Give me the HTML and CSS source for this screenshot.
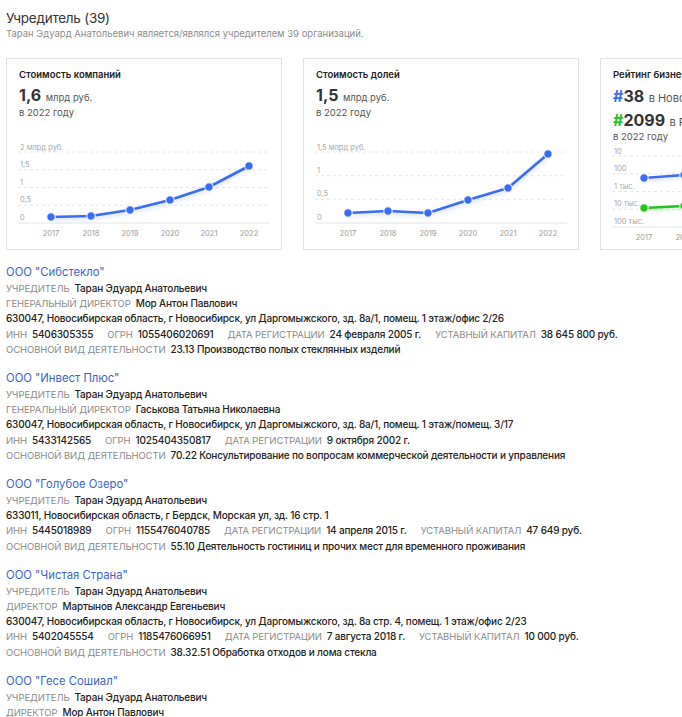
FILE: index.html
```html
<!DOCTYPE html>
<html lang="ru">
<head>
<meta charset="utf-8">
<title>Учредитель</title>
<link rel="stylesheet" href="styles.css">
</head>
<body>
<div class="page">
  <h1 class="title">Учредитель (39)</h1>
  <p class="subtitle">Таран Эдуард Анатольевич является/являлся учредителем 39 организаций.</p>

  <div class="cards">
    <div class="card">
      <div class="card-title">Стоимость компаний</div>
      <div class="big"><b>1,6</b> <span class="unit">млрд руб.</span></div>
      <div class="year">в 2022 году</div>
      <svg class="chart" width="252" height="100" viewBox="0 0 252 100">
        <g class="grid">
          <line x1="0" y1="14" x2="252" y2="14"/>
          <line x1="0" y1="31.75" x2="252" y2="31.75"/>
          <line x1="0" y1="49.5" x2="252" y2="49.5"/>
          <line x1="0" y1="67.25" x2="252" y2="67.25"/>
        </g>
        <line class="base" x1="0" y1="85" x2="252" y2="85"/>
        <g class="ylab">
          <text x="2" y="11.5">2 млрд руб.</text>
          <text x="2" y="29">1,5</text>
          <text x="2" y="46.5">1</text>
          <text x="2" y="64">0,5</text>
          <text x="2" y="82">0</text>
        </g>
        <g class="xlab">
          <text x="33" y="98">2017</text>
          <text x="73" y="98">2018</text>
          <text x="112" y="98">2019</text>
          <text x="152" y="98">2020</text>
          <text x="191" y="98">2021</text>
          <text x="231" y="98">2022</text>
        </g>
        <polyline class="line blue" points="33,79 73,78 112,72 152,62 191,49 231,28"/>
        <g class="dots blue">
          <circle cx="33" cy="79" r="4.2"/><circle cx="73" cy="78" r="4.2"/><circle cx="112" cy="72" r="4.2"/>
          <circle cx="152" cy="62" r="4.2"/><circle cx="191" cy="49" r="4.2"/><circle cx="231" cy="28" r="4.2"/>
        </g>
      </svg>
    </div>

    <div class="card">
      <div class="card-title">Стоимость долей</div>
      <div class="big"><b>1,5</b> <span class="unit">млрд руб.</span></div>
      <div class="year">в 2022 году</div>
      <svg class="chart" width="252" height="100" viewBox="0 0 252 100">
        <g class="grid">
          <line x1="0" y1="14" x2="252" y2="14"/>
          <line x1="0" y1="37.7" x2="252" y2="37.7"/>
          <line x1="0" y1="61.3" x2="252" y2="61.3"/>
        </g>
        <line class="base" x1="0" y1="85" x2="252" y2="85"/>
        <g class="ylab">
          <text x="2" y="11.5">1,5 млрд руб.</text>
          <text x="2" y="35">1</text>
          <text x="2" y="58">0,5</text>
          <text x="2" y="82">0</text>
        </g>
        <g class="xlab">
          <text x="33" y="98">2017</text>
          <text x="73" y="98">2018</text>
          <text x="113" y="98">2019</text>
          <text x="153" y="98">2020</text>
          <text x="193" y="98">2021</text>
          <text x="233" y="98">2022</text>
        </g>
        <polyline class="line blue" points="33,75 73,73 113,75 153,62 193,50 233,16"/>
        <g class="dots blue">
          <circle cx="33" cy="75" r="4.2"/><circle cx="73" cy="73" r="4.2"/><circle cx="113" cy="75" r="4.2"/>
          <circle cx="153" cy="62" r="4.2"/><circle cx="193" cy="50" r="4.2"/><circle cx="233" cy="16" r="4.2"/>
        </g>
      </svg>
    </div>

    <div class="card">
      <div class="card-title">Рейтинг бизнесменов</div>
      <div class="big rank"><b><span class="hash-blue">#</span>38</b> <span class="place">в Новосибирской области</span></div>
      <div class="big rank"><b><span class="hash-green">#</span>2099</b> <span class="place">в России</span></div>
      <div class="year tight">в 2022 году</div>
      <svg class="chart" width="252" height="100" viewBox="0 0 252 100">
        <g class="grid">
          <line x1="0" y1="14" x2="252" y2="14"/>
          <line x1="0" y1="31.75" x2="252" y2="31.75"/>
          <line x1="0" y1="49.5" x2="252" y2="49.5"/>
          <line x1="0" y1="67.25" x2="252" y2="67.25"/>
        </g>
        <line class="base" x1="0" y1="85" x2="252" y2="85"/>
        <g class="ylab">
          <text x="2" y="11.5">10</text>
          <text x="2" y="29">100</text>
          <text x="2" y="46.5">1 тыс.</text>
          <text x="2" y="64">10 тыс.</text>
          <text x="2" y="82">100 тыс.</text>
        </g>
        <g class="xlab">
          <text x="32" y="98">2017</text>
          <text x="72" y="98">2018</text>
          <text x="112" y="98">2019</text>
          <text x="152" y="98">2020</text>
          <text x="192" y="98">2021</text>
          <text x="232" y="98">2022</text>
        </g>
        <polyline class="line blue" points="32,36 72,33 112,30 152,26 192,22 232,18"/>
        <polyline class="line green" points="32,66 72,64 112,62 152,60 192,58 232,56"/>
        <g class="dots blue">
          <circle cx="32" cy="36" r="4.2"/><circle cx="72" cy="33" r="4.2"/><circle cx="112" cy="30" r="4.2"/>
          <circle cx="152" cy="26" r="4.2"/><circle cx="192" cy="22" r="4.2"/><circle cx="232" cy="18" r="4.2"/>
        </g>
        <g class="dots green">
          <circle cx="32" cy="66" r="4.2"/><circle cx="72" cy="64" r="4.2"/><circle cx="112" cy="62" r="4.2"/>
          <circle cx="152" cy="60" r="4.2"/><circle cx="192" cy="58" r="4.2"/><circle cx="232" cy="56" r="4.2"/>
        </g>
      </svg>
    </div>
  </div>

  <div class="companies">
    <div class="company">
      <a class="name" href="#">ООО "Сибстекло"</a>
      <div class="row"><span class="lbl">Учредитель</span><span class="val">Таран Эдуард Анатольевич</span></div>
      <div class="row"><span class="lbl">Генеральный директор</span><span class="val">Мор Антон Павлович</span></div>
      <div class="row"><span class="val">630047, Новосибирская область, г Новосибирск, ул Даргомыжского, зд. 8а/1, помещ. 1 этаж/офис 2/26</span></div>
      <div class="row"><span class="lbl">ИНН</span><span class="val">5406305355</span><span class="lbl">ОГРН</span><span class="val">1055406020691</span><span class="lbl">Дата регистрации</span><span class="val">24 февраля 2005 г.</span><span class="lbl">Уставный капитал</span><span class="val">38 645 800 руб.</span></div>
      <div class="row"><span class="lbl">Основной вид деятельности</span><span class="val">23.13 Производство полых стеклянных изделий</span></div>
    </div>

    <div class="company">
      <a class="name" href="#">ООО "Инвест Плюс"</a>
      <div class="row"><span class="lbl">Учредитель</span><span class="val">Таран Эдуард Анатольевич</span></div>
      <div class="row"><span class="lbl">Генеральный директор</span><span class="val">Гаськова Татьяна Николаевна</span></div>
      <div class="row"><span class="val">630047, Новосибирская область, г Новосибирск, ул Даргомыжского, зд. 8а/1, помещ. 1 этаж/помещ. 3/17</span></div>
      <div class="row"><span class="lbl">ИНН</span><span class="val">5433142565</span><span class="lbl">ОГРН</span><span class="val">1025404350817</span><span class="lbl">Дата регистрации</span><span class="val">9 октября 2002 г.</span></div>
      <div class="row"><span class="lbl">Основной вид деятельности</span><span class="val">70.22 Консультирование по вопросам коммерческой деятельности и управления</span></div>
    </div>

    <div class="company">
      <a class="name" href="#">ООО "Голубое Озеро"</a>
      <div class="row"><span class="lbl">Учредитель</span><span class="val">Таран Эдуард Анатольевич</span></div>
      <div class="row"><span class="val">633011, Новосибирская область, г Бердск, Морская ул, зд. 16 стр. 1</span></div>
      <div class="row"><span class="lbl">ИНН</span><span class="val">5445018989</span><span class="lbl">ОГРН</span><span class="val">1155476040785</span><span class="lbl">Дата регистрации</span><span class="val">14 апреля 2015 г.</span><span class="lbl">Уставный капитал</span><span class="val">47 649 руб.</span></div>
      <div class="row"><span class="lbl">Основной вид деятельности</span><span class="val">55.10 Деятельность гостиниц и прочих мест для временного проживания</span></div>
    </div>

    <div class="company">
      <a class="name" href="#">ООО "Чистая Страна"</a>
      <div class="row"><span class="lbl">Учредитель</span><span class="val">Таран Эдуард Анатольевич</span></div>
      <div class="row"><span class="lbl">Директор</span><span class="val">Мартынов Александр Евгеньевич</span></div>
      <div class="row"><span class="val">630047, Новосибирская область, г Новосибирск, ул Даргомыжского, зд. 8а стр. 4, помещ. 1 этаж/офис 2/23</span></div>
      <div class="row"><span class="lbl">ИНН</span><span class="val">5402045554</span><span class="lbl">ОГРН</span><span class="val">1185476066951</span><span class="lbl">Дата регистрации</span><span class="val">7 августа 2018 г.</span><span class="lbl">Уставный капитал</span><span class="val">10 000 руб.</span></div>
      <div class="row"><span class="lbl">Основной вид деятельности</span><span class="val">38.32.51 Обработка отходов и лома стекла</span></div>
    </div>

    <div class="company">
      <a class="name" href="#">ООО "Гесе Сошиал"</a>
      <div class="row"><span class="lbl">Учредитель</span><span class="val">Таран Эдуард Анатольевич</span></div>
      <div class="row"><span class="lbl">Директор</span><span class="val">Мор Антон Павлович</span></div>
    </div>
  </div>
</div>
</body>
</html>
```

FILE: styles.css
```css
* { box-sizing: border-box; }
html, body { margin: 0; padding: 0; background: #fff; }
body {
  font-family: Inter, "Noto Sans", "DejaVu Sans", sans-serif;
  color: #222;
  overflow: hidden;
}
.page {
  padding: 8px 0 0 6px;
  width: 682px;
  height: 717px;
  overflow: hidden;
}
.title {
  margin: 0;
  font-size: 13.5px;
  font-weight: 400;
  letter-spacing: -0.25px;
  line-height: 20px;
  color: #333;
}
.subtitle {
  margin: 0;
  font-size: 9.5px;
  line-height: 12px;
  color: #8c8c8c;
}
.cards {
  display: flex;
  gap: 21px;
  margin-top: 18px;
  width: 900px;
}
.card {
  flex: 0 0 276px;
  height: 192px;
  border: 1px solid #e2e2e2;
  padding: 9px 11px 11px;
  display: flex;
  flex-direction: column;
}
.card-title {
  font-size: 9.5px;
  font-weight: 600;
  line-height: 13px;
  color: #222;
  padding-left: 1px;
  white-space: nowrap;
}
.big {
  margin-top: 5px;
  line-height: 18px;
  padding-left: 1px;
  white-space: nowrap;
}
.big b {
  font-size: 16px;
  font-weight: 700;
  color: #333;
}
.unit {
  font-size: 9.5px;
  color: #555;
}
.year {
  font-size: 9.5px;
  line-height: 12px;
  color: #555;
  padding-left: 1px;
}
.rank { line-height: 20px; }
.rank + .rank { margin-top: 2px; }
.place { font-size: 11px; color: #555; }
.hash-blue { color: #3a6cf2; }
.hash-green { color: #22c21f; }
.year.tight { line-height: 10px; }
.chart {
  display: block;
  margin-top: auto;
  overflow: visible;
}
.grid line {
  stroke: #e6e6e6;
  stroke-width: 1;
  stroke-dasharray: 3 3;
}
.base { stroke: #e4e4e4; stroke-width: 1; }
.ylab text {
  font-size: 7.5px;
  fill: #a8a8a8;
  font-family: Inter, "Noto Sans", sans-serif;
}
.xlab text {
  font-size: 7.5px;
  fill: #9a9a9a;
  text-anchor: middle;
  font-family: Inter, "Noto Sans", sans-serif;
}
.line {
  fill: none;
  stroke-width: 2.6;
  stroke-linejoin: round;
  stroke-linecap: round;
}
.line.blue { stroke: #3a6cf2; filter: drop-shadow(0 2px 2px rgba(58, 108, 242, 0.25)); }
.line.green { stroke: #22c21f; filter: drop-shadow(0 2px 2px rgba(34, 194, 31, 0.25)); }
.dots circle { stroke: #fff; stroke-width: 1; }
.dots.blue circle { fill: #3a6cf2; }
.dots.green circle { fill: #22c21f; }

.companies { margin-top: 13px; }
.company { margin-bottom: 12px; }
.name {
  display: block;
  font-size: 11.3px;
  line-height: 18px;
  color: #3d63c8;
  text-decoration: none;
}
.row {
  font-size: 10px;
  line-height: 15.2px;
  white-space: nowrap;
}
.lbl {
  text-transform: uppercase;
  color: #8a8a8a;
  font-weight: 400;
  font-size: 9.5px;
  letter-spacing: -0.1px;
  margin-right: 5px;
}
.val {
  color: #222;
  font-weight: 500;
  letter-spacing: -0.18px;
  margin-right: 14px;
}
```
